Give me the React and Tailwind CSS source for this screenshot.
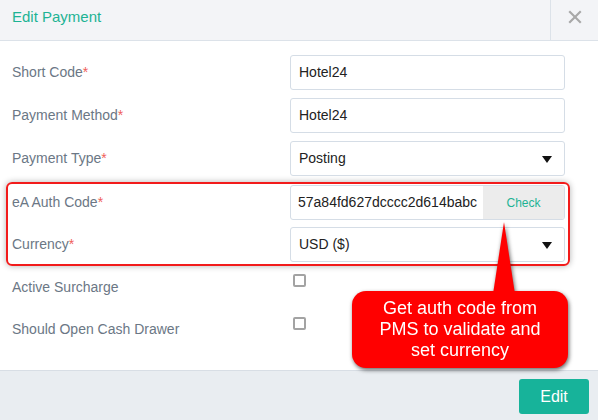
import React from 'react';
import { X } from 'lucide-react';

const Req = () => <span className="text-[#f0605a]">*</span>;

const Caret = () => (
  <svg width="10" height="8" viewBox="0 0 10 8" className="absolute right-[12px] top-1/2 -translate-y-1/2">
    <path d="M0 1 L10 1 L5 8 Z" fill="#111" />
  </svg>
);

const Row = ({ label, required = true, children }) => (
  <div className="flex items-center h-[35px]">
    <div className="w-[278px] text-[14px] text-[#6b7785]">
      {label}
      {required && <Req />}
    </div>
    <div className="w-[275px] h-[35px] relative">{children}</div>
  </div>
);

const TextInput = ({ value }) => (
  <div className="h-full border border-[#d5dde6] rounded-[3px] bg-white flex items-center px-[8px] text-[14px] text-[#222]">
    {value}
  </div>
);

const SelectInput = ({ value }) => (
  <div className="h-full border border-[#d5dde6] rounded-[3px] bg-white flex items-center px-[8px] text-[14px] text-[#222] relative">
    {value}
    <Caret />
  </div>
);

const CheckRow = ({ label, offset }) => (
  <div className="flex h-[42px]">
    <div className="w-[281px] text-[14px] text-[#6b7785] flex items-center">{label}</div>
    <div className={`w-[13px] h-[13px] border-2 border-[#a3a3a3] rounded-[2px] ${offset}`} />
  </div>
);

export default function App() {
  return (
    <div className="w-[598px] h-[420px] relative bg-white flex flex-col overflow-hidden font-['Liberation_Sans',Arial,sans-serif]">
      {/* Header */}
      <div className="flex h-[41px] bg-[#f3f4f7] border-b border-[#dce2e9] shrink-0">
        <div className="flex-1 flex items-center pl-[12px] pb-[6px] text-[15px] text-[#1db394]">Edit Payment</div>
        <div className="w-[48px] border-l border-[#dce2e9] flex items-center justify-center pb-[6px] text-[#a8a8a8]">
          <X size={20} strokeWidth={2.6} strokeLinecap="square" />
        </div>
      </div>

      {/* Body */}
      <div className="flex-1 px-[12px] pt-[14px] flex flex-col">
        <div className="flex flex-col gap-[8px]">
          <Row label="Short Code">
            <TextInput value="Hotel24" />
          </Row>
          <Row label="Payment Method">
            <TextInput value="Hotel24" />
          </Row>
          <Row label="Payment Type">
            <SelectInput value="Posting" />
          </Row>
        </div>

        <div className="mt-[6px] -ml-[6px] w-[564px] border-2 border-[#f21b1b] rounded-[6px] pl-[4px] pt-[1px] pb-[2px] flex flex-col gap-[7px] shadow-[0_0_6px_rgba(0,0,0,0.3)]">
          <Row label="eA Auth Code">
            <div className="h-full border border-[#d5dde6] rounded-[3px] bg-white flex overflow-hidden">
              <div className="flex-1 flex items-center pl-[7px] text-[14px] text-[#222] overflow-hidden whitespace-nowrap">
                57a84fd627dcccc2d614babc
              </div>
              <div className="w-[81px] bg-[#ececec] flex items-center justify-center text-[12px] text-[#1db394]">Check</div>
            </div>
          </Row>
          <Row label="Currency">
            <SelectInput value="USD ($)" />
          </Row>
        </div>

        <CheckRow label="Active Surcharge" offset="mt-[8px]" />
        <CheckRow label="Should Open Cash Drawer" offset="mt-[9px]" />
      </div>

      {/* Footer */}
      <div className="h-[50px] shrink-0 bg-[#e9edf1] border-t border-[#d8dee5] flex justify-end items-start pt-[8px] pr-[9px]">
        <button className="w-[70px] h-[35px] rounded-[3px] bg-[#17b39a] text-white text-[16px]">Edit</button>
      </div>

      {/* Callout */}
      <div className="absolute left-[352px] top-[222px] w-[216px] h-[146px] drop-shadow-[1px_2px_2px_rgba(0,0,0,0.6)]">
        <svg width="24" height="72" viewBox="0 0 24 72" className="absolute left-[140px] top-0">
          <path d="M12 0 L1 72 L23 72 Z" fill="#ff0000" />
        </svg>
        <div className="absolute left-0 top-[69px] w-[216px] h-[77px] rounded-[14px] bg-[#ff0000] flex items-center justify-center text-center text-white text-[18px] leading-[21px]">
          Get auth code from
          <br />
          PMS to validate and
          <br />
          set currency
        </div>
      </div>
    </div>
  );
}
